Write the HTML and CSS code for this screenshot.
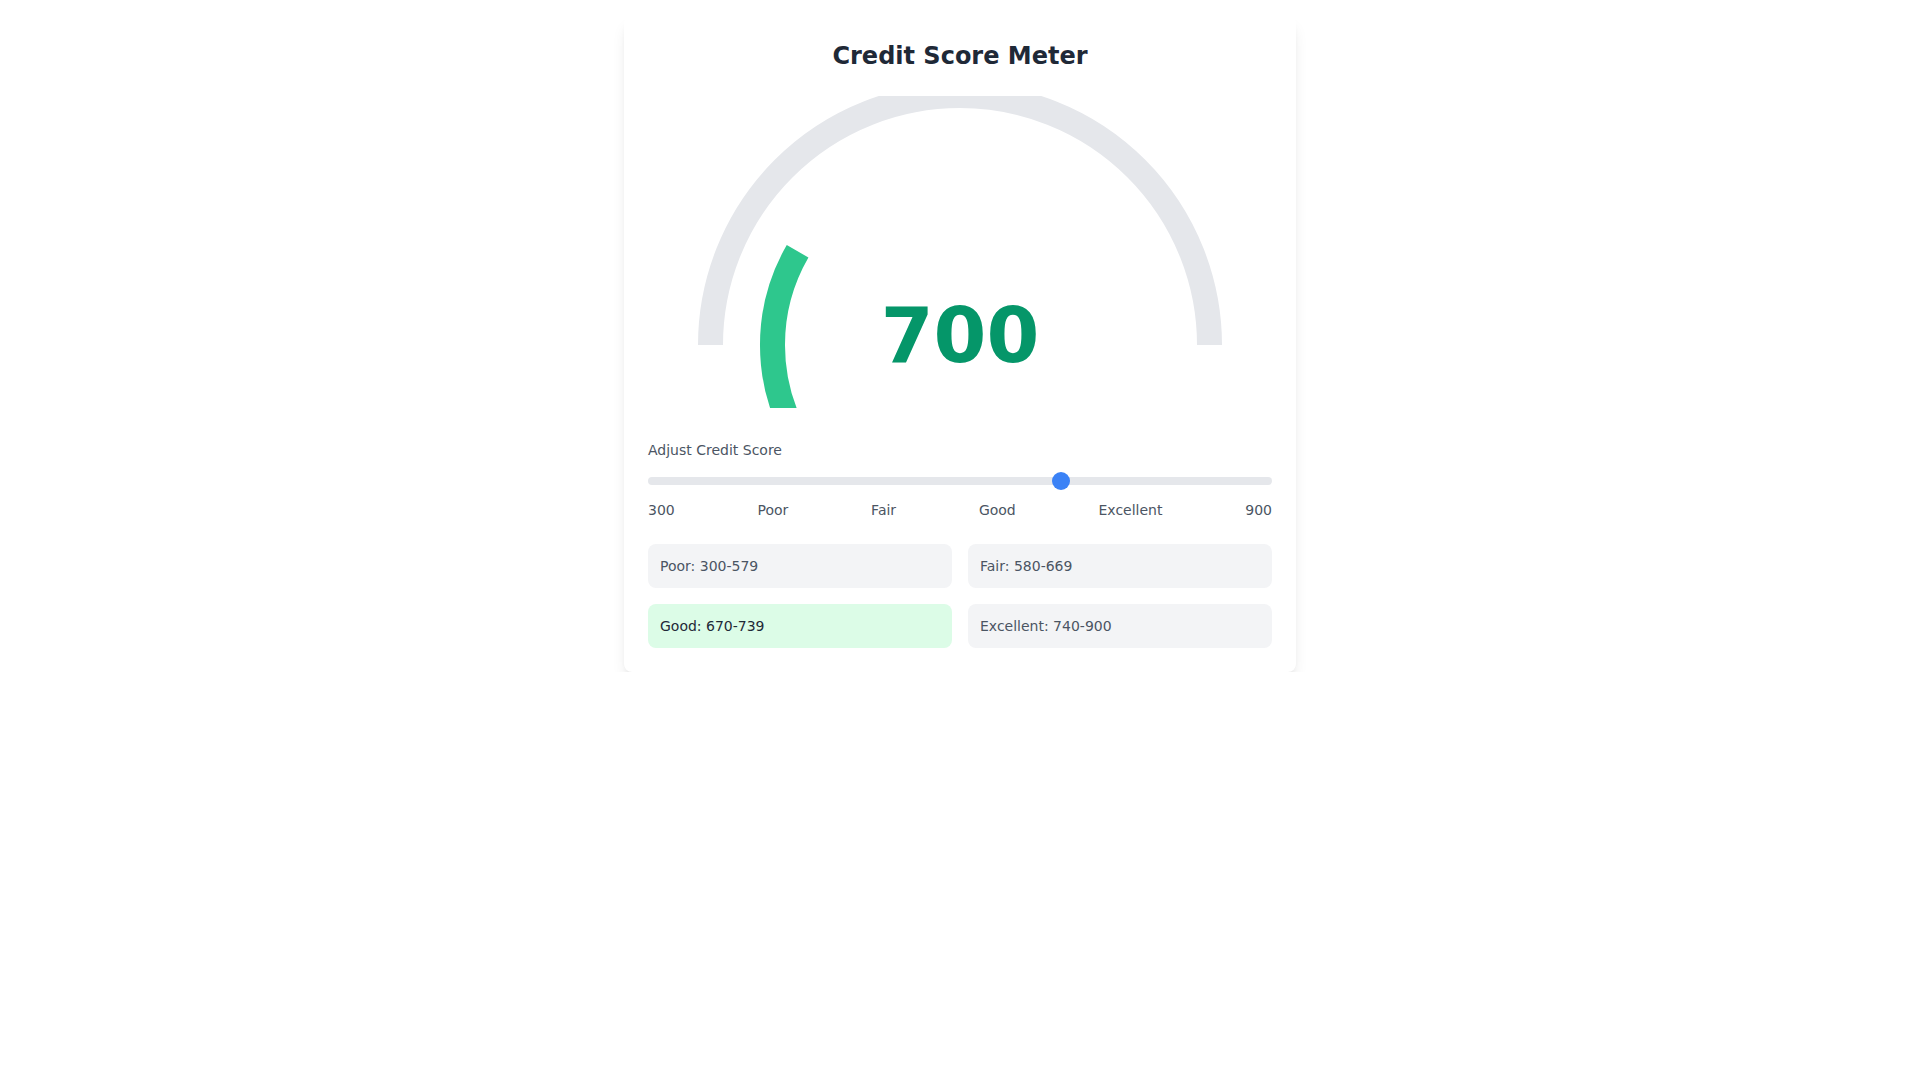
FILE: index.html
```html
<!DOCTYPE html>
<html lang="en">
<head>
<meta charset="utf-8">
<title>Credit Score Meter</title>
<link rel="stylesheet" href="styles.css">
</head>
<body>
<div class="page">
  <div class="card">
    <h1 class="title">Credit Score Meter</h1>
    <div class="gauge">
      <svg class="gauge-svg" width="648" height="312" viewBox="0 0 648 312">
        <path d="M 62.5 249 A 249.5 249.5 0 0 1 561.5 249" fill="none" stroke="#e5e7eb" stroke-width="25"/>
        <path d="M 149.6 155.25 A 187.5 187.5 0 0 0 149.6 342.75" fill="none" stroke="#2ec78d" stroke-width="25"/>
        <text x="312" y="266.3" text-anchor="middle" class="score">700</text>
      </svg>
    </div>
    <label class="slider-label" for="score">Adjust Credit Score</label>
    <input class="slider" id="score" type="range" min="300" max="900" value="700">
    <div class="scale">
      <span>300</span>
      <span>Poor</span>
      <span>Fair</span>
      <span>Good</span>
      <span>Excellent</span>
      <span>900</span>
    </div>
    <div class="ranges">
      <div class="range">Poor: 300-579</div>
      <div class="range">Fair: 580-669</div>
      <div class="range range-active">Good: 670-739</div>
      <div class="range">Excellent: 740-900</div>
    </div>
  </div>
</div>
</body>
</html>
```

FILE: styles.css
```css
* { box-sizing: border-box; }
html, body { margin: 0; padding: 0; background: #ffffff; }
body { font-family: "DejaVu Sans", sans-serif; color: #1f2937; }

.page {
  padding-top: 16px;
  display: flex;
  justify-content: center;
}

.card {
  width: 672px;
  padding: 24px;
  background: #ffffff;
  border-radius: 8px;
  box-shadow: 0 10px 15px -3px rgba(0,0,0,0.1), 0 4px 6px -4px rgba(0,0,0,0.1);
  display: flex;
  flex-direction: column;
}

.title {
  margin: 0 0 24px 0;
  font-size: 24px;
  line-height: 32px;
  font-weight: 700;
  text-align: center;
  color: #1f2937;
}

.gauge {
  height: 312px;
  margin-bottom: 32px;
}

.gauge-svg { display: block; overflow: hidden; }

.score {
  font-family: "DejaVu Sans", sans-serif;
  font-size: 76px;
  font-weight: 700;
  fill: #059669;
}

.slider-label {
  display: block;
  font-size: 14px;
  line-height: 20px;
  color: #4b5563;
  margin-bottom: 17px;
}

.slider {
  -webkit-appearance: none;
  appearance: none;
  display: block;
  width: 100%;
  height: 8px;
  margin: 0;
  padding: 0;
  background: #e5e7eb;
  border-radius: 8px;
  outline: none;
}

.slider::-webkit-slider-thumb {
  -webkit-appearance: none;
  appearance: none;
  width: 18px;
  height: 18px;
  border-radius: 50%;
  background: #3b82f6;
  border: none;
}

.scale {
  display: flex;
  justify-content: space-between;
  margin-top: 15px;
  font-size: 14px;
  line-height: 20px;
  color: #4b5563;
}

.ranges {
  margin-top: 24px;
  display: grid;
  grid-template-columns: 1fr 1fr;
  gap: 16px;
}

.range {
  padding: 12px;
  border-radius: 8px;
  background: #f3f4f6;
  font-size: 14px;
  line-height: 20px;
  color: #4b5563;
}

.range-active {
  background: #dcfce7;
  color: #1f2937;
}
```
